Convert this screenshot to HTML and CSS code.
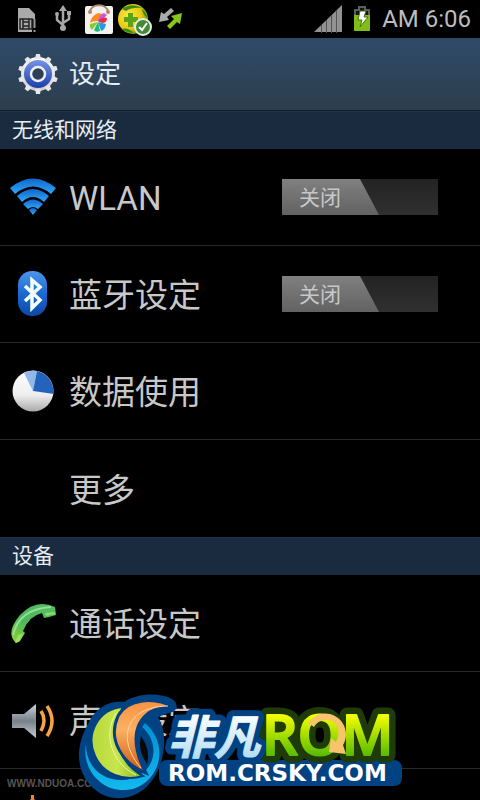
FILE: index.html
```html
<!DOCTYPE html>
<html lang="zh-CN">
<head>
<meta charset="utf-8">
<meta name="viewport" content="width=device-width, initial-scale=1">
<title>设定</title>
<link rel="stylesheet" href="styles.css">
</head>
<body>
<div class="screen">
  <div class="status">
    <svg class="status-left" width="190" height="38" viewBox="0 0 190 38" aria-hidden="true">
      <defs>
        <radialGradient id="ball" cx=".35" cy=".4" r=".7"><stop offset="0" stop-color="#ffe93a"/><stop offset=".6" stop-color="#e8c813"/><stop offset="1" stop-color="#5f9a10"/></radialGradient>
      </defs>
      <path d="M18 8h11l6 6v5h-3v13H18z" fill="#aaa"/>
      <path d="M20 19h12v10H20zM23 19v10M29 19v10M23 22h6M23 26h6" fill="none" stroke="#222" stroke-width="1.500"/>
      <path d="M34.500 19v9M34.500 30v2" stroke="#999" stroke-width="2"/>
      <path d="M63 9v19M63 25l-6-5v-5M63 23l6-4v-5" fill="none" stroke="#a8a8a8" stroke-width="2.500"/>
      <path d="M63 5l4 6h-8zM67 11h4v4h-4z" fill="#a8a8a8"/><circle cx="57" cy="14" r="2" fill="#a8a8a8"/><circle cx="63" cy="28" r="3" fill="#a8a8a8"/>
      <rect x="85" y="6" width="28" height="28" rx="2" fill="#f2f2f2"/>
      <path d="M90 12c1-9 17-9 18 0" fill="none" stroke="#a88764" stroke-width="2"/><circle cx="90" cy="12" r="2" fill="#bc8453"/><circle cx="108" cy="12" r="2" fill="#bc8453"/>
      <path d="M98 21Q92 21 90 23 91 16 98 13l5 1z" fill="#ff8b20"/><path d="M98 21q1-6 6-8l3 2-7 7z" fill="#c65cdc"/><path d="M98 21q4-5 9-3 0 5-5 5z" fill="#ed2a44"/><path d="M98 22l8 2q-1 6-5 7z" fill="#289be0"/><path d="M98 22l2 9q-4 2-6-1z" fill="#22b875"/><path d="M98 22l-6 8q-3-3-2-6z" fill="#8bc92d"/>
      <circle cx="133" cy="19" r="15" fill="url(#ball)"/><path d="M122 9q9-7 20-1-10-1-16 3zM122 29q6-2 12 4-8 0-12-4zM142 9q5 4 5 9-4-3-5-9z" fill="#378b13"/>
      <path d="M128 13h5v4h5v5h-5v5h-5v-5h-4v-5h4z" fill="#5aa31a"/>
      <circle cx="143" cy="27" r="8" fill="#438a36" stroke="#e3eee0" stroke-width="2"/><path d="M139 27l3 3 5-7" fill="none" stroke="#fff" stroke-width="2"/>
      <path d="M171 8l3 3-7 6 2 3-10 2 2-10 3 2z" fill="#aaa"/><path d="M167 26l7-7-3-3 11-3-2 11-3-2-7 7z" fill="#8ac51a"/>
    </svg>
    <div class="status-right">
      <svg width="28" height="28" viewBox="0 0 28 28" aria-hidden="true"><path d="M0 27L28 0v27z" fill="#929292"/><path d="M7.500 20v8M12.500 15v13M17.500 10v18M22.500 5v23" stroke="#555"/></svg>
      <svg width="18" height="26" viewBox="0 0 18 26" aria-hidden="true"><path d="M5 0h8v3h4v22H1V3h4z" fill="#5b605b"/><path d="M7 2h4v3h4v4H3V5h4z" fill="#151515"/><path d="M1 9h16v16H1z" fill="#80bd16"/><path d="M7 5h6l-2 6h4L7 21l2-7H5z" fill="#fff" stroke="#487216"/></svg>
      <span>AM 6:06</span>
    </div>
  </div>

  <header class="title">
    <svg width="42" height="42" viewBox="-21 -21 42 42" aria-hidden="true">
      <defs>
        <linearGradient id="gearRim" x2="0" y2="1"><stop stop-color="#fff"/><stop offset="1" stop-color="#cfc9c5"/></linearGradient>
        <linearGradient id="gearBlue" x2="0" y2="1"><stop stop-color="#7793e4"/><stop offset="1" stop-color="#1a3fab"/></linearGradient>
      </defs>
      <circle r="17" fill="url(#gearRim)"/>
      <g fill="#e8e6e6"><path id="tooth" d="M-3-15l1-5h4l1 5zM-3 15l1 5h4l1-5z"/><use href="#tooth" transform="rotate(36)"/><use href="#tooth" transform="rotate(72)"/><use href="#tooth" transform="rotate(108)"/><use href="#tooth" transform="rotate(144)"/></g>
      <circle r="14" fill="url(#gearBlue)"/><circle r="7" fill="#2e4055" stroke="#eee" stroke-width="2.500"/>
    </svg>
    <h1>设定</h1>
  </header>

  <main>
    <h2>无线和网络</h2>
    <ul>
      <li>
        <svg class="icon" viewBox="0 0 48 48" aria-hidden="true">
          <defs><linearGradient id="wifi" x2="0" y2="1"><stop stop-color="#1264c8"/><stop offset="1" stop-color="#2cabff"/></linearGradient></defs>
          <g fill="url(#wifi)"><path d="M1 15Q24-4 47 15l-5 6Q24 6 6 21z"/><path d="M8 23Q24 9 40 23l-5 6Q24 19 13 29z"/><path d="M14 31q10-9 20 0l-5 5q-5-4-10 0z"/><path d="M20 37q4-4 8 0l-4 5z"/></g>
        </svg>
        <span class="label" id="wlan">WLAN</span>
        <button class="switch" type="button" role="switch" aria-checked="false" aria-labelledby="wlan"><span>关闭</span></button>
      </li>
      <li>
        <svg class="icon" viewBox="0 0 48 48" aria-hidden="true">
          <defs><linearGradient id="bt" x2="0" y2="1"><stop stop-color="#4c94ec"/><stop offset=".5" stop-color="#1c6ad2"/><stop offset="1" stop-color="#0b48a8"/></linearGradient></defs>
          <rect x="9" y="1" width="29" height="45" rx="14" fill="url(#bt)"/><path d="M16 16l15 14-8 8V10l8 7-15 14" fill="none" stroke="#f4fff8" stroke-width="3.500"/>
        </svg>
        <span class="label" id="bluetooth">蓝牙设定</span>
        <button class="switch" type="button" role="switch" aria-checked="false" aria-labelledby="bluetooth"><span>关闭</span></button>
      </li>
      <li>
        <svg class="icon" viewBox="0 0 48 48" aria-hidden="true">
          <defs><linearGradient id="pie" x2="0" y2="1"><stop stop-color="#fff"/><stop offset=".6" stop-color="#eee"/><stop offset="1" stop-color="#aaa"/></linearGradient></defs>
          <circle cx="24" cy="24" r="20.500" fill="url(#pie)"/><path d="M24 24L15 6Q21 3 28 4z" fill="#91b8e8"/><path d="M24 24l4-20q16 4 17 23z" fill="#2463bc"/>
        </svg>
        <span class="label">数据使用</span>
      </li>
      <li><span class="icon"></span><span class="label">更多</span></li>
    </ul>
    <h2>设备</h2>
    <ul>
      <li>
        <svg class="icon" viewBox="0 0 48 48" aria-hidden="true">
          <defs><linearGradient id="phone" x1="1" x2="0" y2="1"><stop stop-color="#55bd63"/><stop offset=".6" stop-color="#4fb75b"/><stop offset="1" stop-color="#91d82d"/></linearGradient></defs>
          <path d="M46 8l1 8-7 2-5 1-2-5q-13 3-19 18l2 2-5 8-4 2Q-4 34 11 16 27-1 46 8z" fill="url(#phone)"/><path d="M4 36Q10 10 42 8" fill="none" stroke="#93df98" stroke-width="2"/><path d="M15 34l-5 9-4 1 3-8zM36 14l10-1v2l-9 2z" fill="#b4ed73" opacity=".6"/>
        </svg>
        <span class="label">通话设定</span>
      </li>
      <li>
        <svg class="icon" viewBox="0 0 48 48" aria-hidden="true">
          <defs><linearGradient id="speaker" x2="0" y2="1"><stop stop-color="#ccd4dc"/><stop offset=".5" stop-color="#77818a"/><stop offset="1" stop-color="#c5cdd4"/></linearGradient></defs>
          <path d="M3 18h12L27 8v34L15 32H3z" fill="url(#speaker)"/><path d="M32 15q6 9 0 20M38 10q10 15 0 30" fill="none" stroke="#f6a542" stroke-width="3.500"/>
        </svg>
        <span class="label">声音设定</span>
      </li>
      <li class="peek">
        <svg class="icon" viewBox="0 0 48 48" aria-hidden="true"><path d="M22 0h3v4l4 3v17H18V7l4-3z" fill="#e98443"/></svg>
      </li>
    </ul>
  </main>

  <span class="watermark">WWW.NDUOA.COM</span>
  <svg class="brand" width="328" height="108" viewBox="76 692 328 108" role="img" aria-label="非凡ROM">
    <defs>
      <linearGradient id="lime" x2="1" y2="0"><stop stop-color="#b5d93a"/><stop offset=".5" stop-color="#c9e54f"/><stop offset="1" stop-color="#7fb522"/></linearGradient>
      <linearGradient id="orange" x2="0" y2="1"><stop stop-color="#fb9140"/><stop offset=".4" stop-color="#fbb062"/><stop offset="1" stop-color="#cf5510"/></linearGradient>
      <linearGradient id="cyan" x2="0" y2="1"><stop stop-color="#008fd2"/><stop offset="1" stop-color="#13b9ed"/></linearGradient>
      <linearGradient id="rom" gradientUnits="userSpaceOnUse" x1="0" y1="715" x2="0" y2="757"><stop stop-color="#f3ff00"/><stop offset="1" stop-color="#53b900"/></linearGradient>
      <linearGradient id="ice" gradientUnits="userSpaceOnUse" x1="0" y1="714" x2="0" y2="757"><stop stop-color="#fff"/><stop offset="1" stop-color="#b5def7"/></linearGradient>
    </defs>
    <path d="M88 724C95 707 111 700 124 702 136 693 160 692 172 699 179 703 178 712 169 713L158 717C170 736 163 767 151 782 134 803 107 803 91 786 76 770 75 747 88 724z" fill="#004282"/>
    <rect x="159" y="760" width="243" height="26" rx="8" fill="#004282"/>
    <path d="M86 744C86 767 102 780 121 780 153 780 164 746 142 727L145 723C168 742 163 779 133 789 103 796 81 769 86 744z" fill="url(#cyan)"/>
    <path d="M140 730q-8 20 6 40 12-20-6-40z" fill="#004282"/><path d="M141 736q-4 14 6 28 4-14-6-28z" fill="#090909"/>
    <path d="M123 707C98 709 85 734 95 756 103 774 124 782 143 776 121 764 108 737 123 707z" fill="url(#lime)" stroke="#004282" stroke-width="2"/>
    <path d="M116 713C102 736 113 764 136 775" fill="none" stroke="#ecfb98"/>
    <path d="M173 707C155 697 128 698 118 716 107 740 123 764 146 773 133 749 131 725 150 712 157 708 164 707 173 707z" fill="url(#orange)" stroke="#004282" stroke-width="3"/>
    <path d="M168 706C122 707 118 742 141 768" fill="none" stroke="#ffd8a6"/>
    <g class="brand-rom"><text class="edge" x="262" y="755">ROM</text></g>
    <g class="brand-cn"><text class="edge" x="168" y="754">非凡</text><text class="face" x="168" y="754">非凡</text></g>
    <g class="brand-rom"><text class="face" x="262" y="755">ROM</text></g>
    <path d="M308 723Q317 711 330 714C347 719 349 737 343 745l3 9-17-2 2-14 5 4C342 730 337 720 326 720q-8 0-12 7z" fill="#f7c36b"/>
    <text class="brand-url" x="168" y="781">ROM.CRSKY.COM</text>
  </svg>
</div>
</body>
</html>
```
FILE: styles.css
```css
* {
  box-sizing: border-box;
}

body {
  margin: 0;
  background: #000;
  color: #c8c8c8;
  font-family: Roboto, "Noto Sans CJK SC", sans-serif;
}

.screen {
  position: relative;
  height: 100vh;
  overflow: hidden;
}

.status {
  display: flex;
  align-items: center;
  height: 38px;
}

.status-left {
  flex: none;
}

.status-right {
  display: flex;
  align-items: center;
  gap: 11px;
  margin-left: auto;
  padding-right: 9px;
  color: #bdbdbd;
  font-size: 24px;
  line-height: 38px;
}

.title {
  display: flex;
  align-items: center;
  gap: 10px;
  height: 73px;
  padding-left: 17px;
  border-bottom: 1px solid #101c28;
  background: linear-gradient(#2f4a68, #2c3e4e);
}

h1,
h2 {
  margin: 0;
  color: #e6edf3;
  font-weight: 400;
}

h1 {
  font-size: 26px;
  line-height: 36px;
}

h2 {
  height: 38px;
  padding-left: 12px;
  border-top: 1px solid #203449;
  background: #1a2b40;
  font-size: 21px;
  line-height: 36px;
}

ul {
  margin: 0;
  padding: 0;
  list-style: none;
}

li {
  display: flex;
  align-items: center;
  height: 97px;
  padding: 0 42px 0 9px;
  border-bottom: 1px solid #292929;
}

li:last-child {
  border-bottom: 0;
}

.icon {
  flex: none;
  width: 48px;
  height: 48px;
  margin-right: 12px;
}

.label {
  flex: 1;
  padding-top: 4px;
  font-size: 33px;
  line-height: 48px;
}

.peek {
  align-items: flex-start;
  padding-top: 26px;
}

.switch {
  width: 156px;
  height: 36px;
  padding: 0;
  border: 0;
  border-radius: 0;
  background: linear-gradient(#232323, #303030);
  color: #c8c8c8;
  font: inherit;
  font-size: 21px;
  line-height: 38px;
  text-align: left;
}

.switch span {
  display: block;
  width: 97px;
  height: 36px;
  padding-left: 17px;
  background: linear-gradient(#808080, #626262);
  clip-path: polygon(0 0, 78px 0, 100% 100%, 0 100%);
}

.watermark {
  position: absolute;
  bottom: 10px;
  left: 7px;
  color: #555;
  font: 700 10px/12px "Liberation Sans", sans-serif;
}

.brand {
  position: absolute;
  bottom: 0;
  left: 76px;
}

.brand-cn {
  font: italic 700 46px "Noto Sans CJK SC", sans-serif;
}

.brand-rom {
  font: 600 56px "Open Sans", sans-serif;
}

.edge,
.face {
  stroke-linejoin: round;
}

.brand-cn .edge {
  fill: #004282;
  stroke: #004282;
  stroke-width: 13px;
}

.brand-cn .face {
  fill: url(#ice);
  stroke: url(#ice);
  stroke-width: 1px;
}

.brand-rom .edge {
  fill: #1f3b08;
  stroke: #1f3b08;
  stroke-width: 15px;
}

.brand-rom .face {
  fill: url(#rom);
  stroke: url(#rom);
  stroke-width: 2px;
}

.brand-url {
  fill: #fff;
  font: 700 23px "DejaVu Sans", sans-serif;
}
```
